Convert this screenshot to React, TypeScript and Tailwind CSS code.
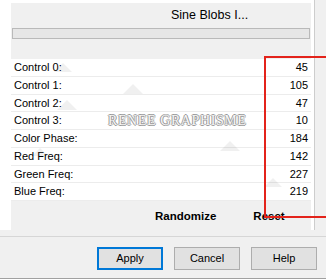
const rows: [string, number][] = [
  ["Control 0:", 45],
  ["Control 1:", 105],
  ["Control 2:", 47],
  ["Control 3:", 10],
  ["Color Phase:", 184],
  ["Red Freq:", 142],
  ["Green Freq:", 227],
  ["Blue Freq:", 219],
];

// faint watermark triangles behind the rows
const tris: [number, number, number][] = [
  [63, 63, 9],
  [133, 84, 10],
  [67, 100, 10],
  [230, 141, 10],
  [273, 178, 9],
  [40, 148, 8],
];

export default function App() {
  return (
    <div className="relative h-[280px] w-[326px] overflow-hidden bg-white font-['Liberation_Sans',Arial,sans-serif] text-[11px] text-black">
      <div className="flex h-[230px]">
        <div className="w-[11px] bg-white" />
        <div className="flex w-[300px] flex-col">
          <div className="h-[3px] bg-white" />
          <div className="flex flex-1 flex-col bg-[#f0f0f0]">
            <div className="flex h-[25px] items-center pl-[160px] text-[12.5px]">Sine Blobs I...</div>
            <div className="mx-[1px] h-[11px] border border-[#b9b9b9] bg-[#e6e6e6]" />
            <div className="h-[20px]" />
            <div className="flex flex-col bg-white">
              {rows.map(([label, value]) => (
                <div
                  key={label}
                  className="flex h-[17.75px] items-center justify-between border-b border-[#ececec] pl-[3px] pr-[3px]"
                >
                  <span>{label}</span>
                  <span>{value}</span>
                </div>
              ))}
            </div>
            <div className="flex flex-1 items-center pt-[3px] text-[11.5px] font-bold">
              <span className="ml-[144px]">Randomize</span>
              <span className="ml-[37px]">Reset</span>
            </div>
          </div>
        </div>
        <div className="flex w-[15px]">
          <div className="w-[3px] bg-white" />
          <div className="w-[1px] bg-[#cdcdcd]" />
          <div className="flex-1 bg-[#f0f0f0]" />
        </div>
      </div>
      <div className="h-[6px] bg-[#f0f0f0]" />
      <div className="h-[1px] bg-[#d6d6d6]" />
      <div className="flex h-[41px] gap-[11px] bg-[#f0f0f0] pl-[97px] pt-[10px]">
        <button className="flex h-[23px] w-[66px] items-center justify-center border-2 border-[#0078d7] bg-[#e1e1e1] text-[11px]">
          Apply
        </button>
        <button className="flex h-[23px] w-[66px] items-center justify-center border border-[#adadad] bg-[#e1e1e1] text-[11px]">
          Cancel
        </button>
        <button className="flex h-[23px] w-[66px] items-center justify-center border border-[#adadad] bg-[#e1e1e1] text-[11px]">
          Help
        </button>
      </div>
      <div className="h-[1px] bg-[#a0a0a0]" />

      <svg className="pointer-events-none absolute left-0 top-0" width="326" height="230">
        {tris.map(([x, y, s], i) => (
          <polygon key={i} points={`${x},${y} ${x - s},${y + s} ${x + s},${y + s}`} fill="#000" fillOpacity="0.06" />
        ))}
      </svg>

      <div className="pointer-events-none absolute left-[108px] top-[110px] font-['Liberation_Serif',serif] text-[14px] tracking-[0.6px] text-[#f6f6f6] [text-shadow:-1px_0_#9a9a9a,1px_0_#9a9a9a,0_-1px_#9a9a9a,0_1px_#9a9a9a]">
        RENEE GRAPHISME
      </div>

      <div className="pointer-events-none absolute left-[264px] top-[56px] h-[162px] w-[80px] border-2 border-[#e3231b]" />
    </div>
  );
}
